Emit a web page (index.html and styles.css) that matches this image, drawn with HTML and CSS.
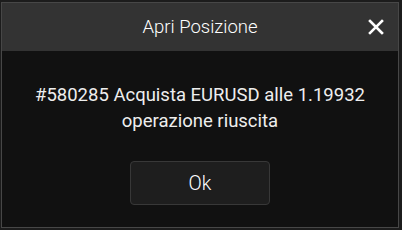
FILE: index.html
```html
<!DOCTYPE html>
<html lang="it">
<head>
  <meta charset="UTF-8" />
  <title>Apri Posizione</title>
  <link rel="stylesheet" href="styles.css">
</head>
<body>
  <div class="dialog">
    <div class="dialog-header">
      <h2>Apri Posizione</h2>
      <button class="close-btn" aria-label="Chiudi">
        <svg width="16" height="16" viewBox="0 0 16 16">
          <path d="M2 2 L14 14 M14 2 L2 14" stroke="#fff" stroke-width="2.6" stroke-linecap="square"/>
        </svg>
      </button>
    </div>
    <div class="dialog-body">
      <p>#580285 Acquista EURUSD alle 1.19932<br>operazione riuscita</p>
      <button class="ok-btn">Ok</button>
    </div>
  </div>
</body>
</html>
```

FILE: styles.css
```css
* {
  margin: 0;
  padding: 0;
  box-sizing: border-box;
}
html, body {
  width: 402px;
  height: 230px;
  background: #1c1c1c;
  font-family: Roboto, 'Noto Sans', sans-serif;
  overflow: hidden;
}
body {
  padding: 2px 2px 2px 1px;
}

/* --------------------------------
   Dialog
----------------------------------- */
.dialog {
  width: 398px;
  height: 226px;
  border: 1px solid #474747;
  background: #111;
  display: flex;
  flex-direction: column;
}
.dialog-header {
  position: relative;
  height: 48px;
  background: #333;
  display: flex;
  align-items: center;
  justify-content: center;
}
.dialog-header h2 {
  font-size: 18.5px;
  font-weight: 300;
  color: #fff;
}
.close-btn {
  position: absolute;
  right: 14px;
  top: 16px;
  background: none;
  border: none;
  width: 16px;
  height: 16px;
  display: flex;
}

.dialog-body {
  flex: 1;
  display: flex;
  flex-direction: column;
  align-items: center;
  padding-top: 31px;
}
.dialog-body p {
  font-size: 18.5px;
  line-height: 26px;
  color: #eee;
  text-align: center;
}
.ok-btn {
  margin-top: 27px;
  width: 140px;
  height: 44px;
  background: #1e1e1e;
  border: 1px solid #383838;
  border-radius: 4px;
  color: #fff;
  font-family: Roboto, 'Noto Sans', sans-serif;
  font-size: 19.5px;
  font-weight: 300;
}
```
